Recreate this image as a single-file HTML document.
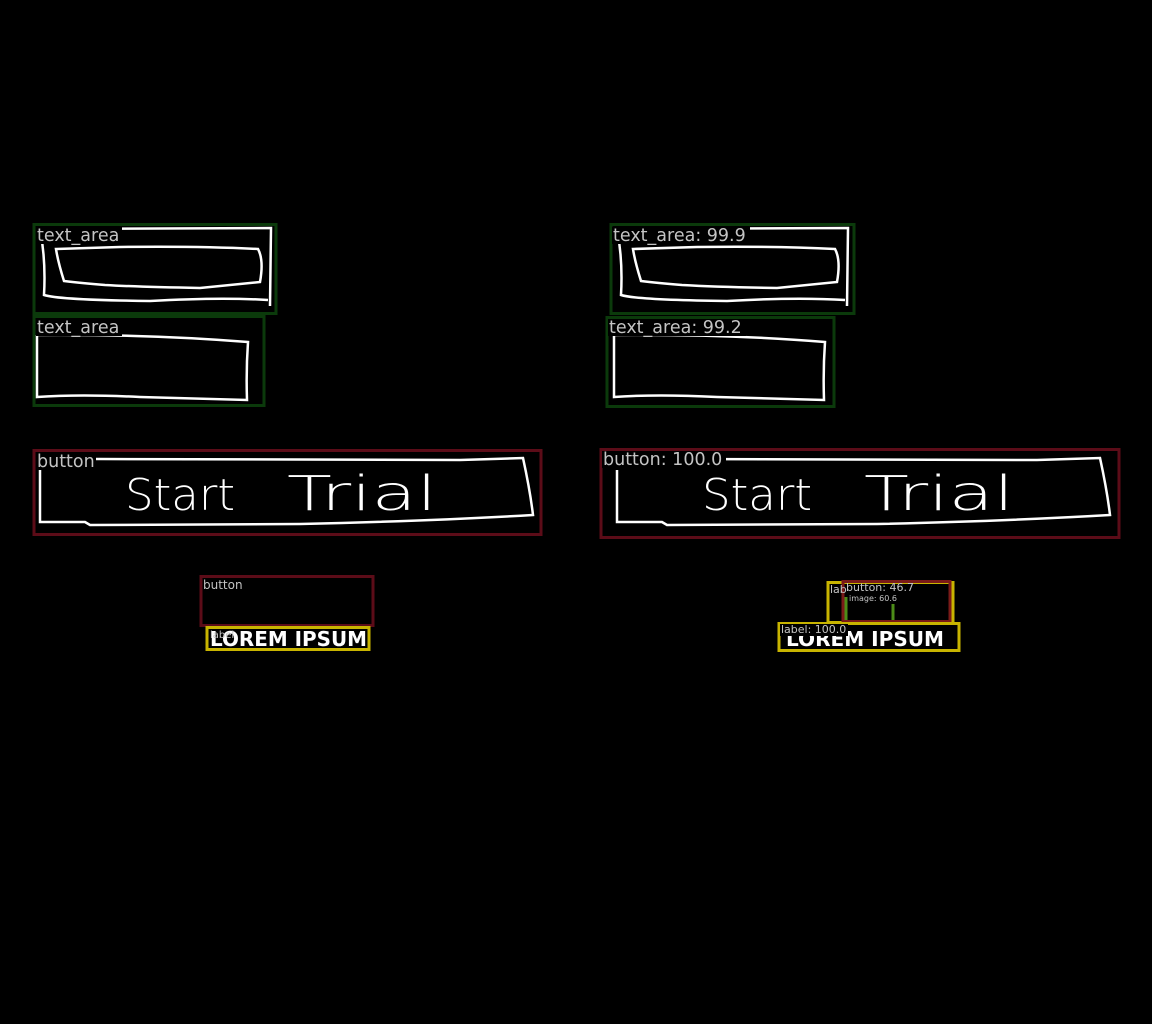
<!DOCTYPE html>
<html><head><meta charset="utf-8"><style>
html,body{margin:0;padding:0;background:#000;width:1152px;height:1024px;overflow:hidden}
svg{display:block}
.l{font-family:"DejaVu Sans","Liberation Sans",sans-serif;fill:#c4c4c4}
.hw{font-family:"DejaVu Sans","Liberation Sans",sans-serif;fill:#fff;font-weight:300}
.lo{font-family:"DejaVu Sans","Liberation Sans",sans-serif;fill:#fff;font-weight:bold}
</style></head><body>
<svg width="1152" height="1024" viewBox="0 0 1152 1024" xmlns="http://www.w3.org/2000/svg">
<rect width="1152" height="1024" fill="#000"/>
<g id="sk" fill="none" stroke="#fff" stroke-width="2.5">
 <path d="M40 229 L271 228 L270 306 M40 229 Q46 260 44 295 Q60 300 150 301 Q220 297 268 300"/>
 <path d="M56 249 L120 247 Q200 246 258 249 Q264 260 260 282 L200 288 Q140 287 105 285 Q80 283 64 281 Q58 262 56 249 Z"/>
 <path d="M37 335 Q150 334 248 342 Q246 370 247 400 L140 397 Q80 394 37 397 L37 335"/>
 <path d="M40 470 L40 522 L85 522 L90 525 L300 524 Q430 521 533 515 Q530 490 523 458 L460 460 L100 459 L72 459"/>
</g>
<text class="hw" x="125" y="510" font-size="44" textLength="110" lengthAdjust="spacingAndGlyphs">Start</text>
<text class="hw" x="287" y="510" font-size="48" textLength="150" lengthAdjust="spacingAndGlyphs">Trial</text>
<use href="#sk" x="577" y="0"/>
<text class="hw" x="702" y="510" font-size="44" textLength="110" lengthAdjust="spacingAndGlyphs">Start</text>
<text class="hw" x="864" y="510" font-size="48" textLength="150" lengthAdjust="spacingAndGlyphs">Trial</text>
<text class="lo" x="210" y="646" font-size="20" textLength="157" lengthAdjust="spacingAndGlyphs">LOREM IPSUM</text>
<text class="lo" x="786" y="646" font-size="20" textLength="158" lengthAdjust="spacingAndGlyphs">LOREM IPSUM</text>
<g fill="none" stroke-width="3">
 <rect x="34" y="224.5" width="242" height="89" stroke="#0b3a0b"/>
 <rect x="34" y="316.5" width="230" height="89" stroke="#0b3a0b"/>
 <rect x="34" y="450.5" width="507" height="84" stroke="#5c0c18"/>
 <rect x="201" y="576.5" width="172" height="49" stroke="#5c0c18"/>
 <rect x="207" y="627.5" width="162" height="22" stroke="#c8b400"/>
 <rect x="611" y="224.5" width="243" height="89" stroke="#0b3a0b"/>
 <rect x="607" y="317.5" width="227" height="89" stroke="#0b3a0b"/>
 <rect x="601" y="449.5" width="518" height="88" stroke="#5c0c18"/>
 <rect x="828" y="582.5" width="125" height="40" stroke="#c8b400"/>
 <rect x="843" y="581.5" width="107" height="40" stroke="#7a1a18"/>
 <line x1="846" y1="597" x2="846" y2="620" stroke="#4c8c18"/>
 <line x1="893" y1="604" x2="893" y2="620" stroke="#4c8c18"/>
 <rect x="779" y="623.5" width="180" height="27" stroke="#c8b400"/>
</g>
<g fill="#000">
 <rect x="36" y="227" width="86" height="17"/>
 <rect x="36" y="319" width="86" height="17"/>
 <rect x="36" y="453" width="60" height="17"/>
 <rect x="612" y="227" width="138" height="17"/>
 <rect x="608" y="319" width="138" height="17"/>
 <rect x="602" y="451" width="124" height="17"/>
 <rect x="780" y="624" width="68" height="12"/>
</g>
<text class="l" x="37" y="241" font-size="17.5">text_area</text>
<text class="l" x="37" y="333" font-size="17.5">text_area</text>
<text class="l" x="37" y="467" font-size="17.5">button</text>
<text class="l" x="203" y="589" font-size="12">button</text>
<text class="l" x="210" y="638" font-size="10">label</text>
<text class="l" x="613" y="241" font-size="17.5">text_area: 99.9</text>
<text class="l" x="609" y="333" font-size="17.5">text_area: 99.2</text>
<text class="l" x="603" y="465" font-size="17.5">button: 100.0</text>
<text class="l" x="830" y="593" font-size="11">lab</text>
<text class="l" x="846" y="591" font-size="11">button: 46.7</text>
<text class="l" x="849" y="601" font-size="8">image: 60.6</text>
<text class="l" x="781" y="633" font-size="11">label: 100.0</text>
</svg>
</body></html>
